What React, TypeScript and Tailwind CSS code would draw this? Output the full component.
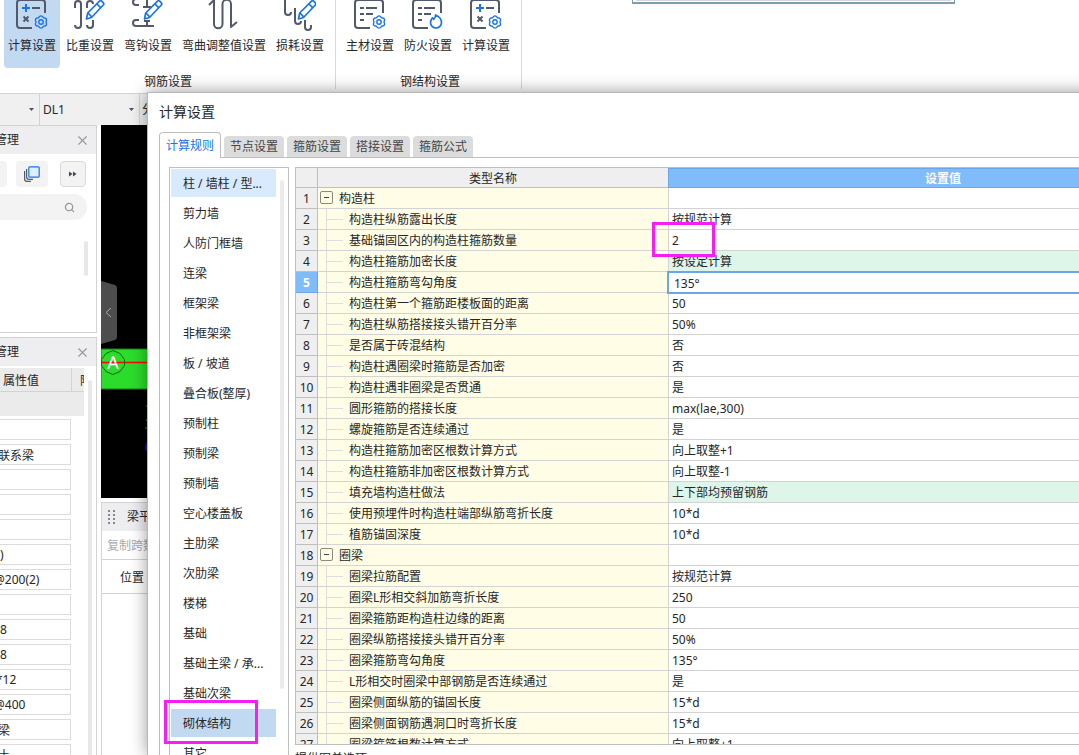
import React from "react";
import { Search, X } from "lucide-react";

const GEAR =
  "M5 0Q6.9 4 2.5 4.3Q0 8-2.5 4.3Q-6.9 4-5 0Q-6.9-4-2.5-4.3Q0-8 2.5-4.3Q6.9-4 5 0z";

const Gear = () => (
  <g transform="translate(25 22)" stroke="#1a73e8" strokeWidth="1.4">
    <path d={GEAR} />
    <circle r="2.2" />
  </g>
);

const Pencil = ({ x = 0 }: { x?: number }) => (
  <g transform={`translate(${x} 0)`} stroke="#1a73e8" strokeWidth="1.7">
    <path d="M12.500 19l1.200-6L25.500 1.200a1.6 1.6 0 0 1 2.2 0l1.6 1.6a1.6 1.6 0 0 1 0 2.2L17.500 17.500z" fill="#fff" />
    <path d="M14 13l3.6 3.8M23 4l3.6 3.6" />
  </g>
);

const Sheet = () => <path d="M29 13V3a3 3 0 0 0-3-3H4a3 3 0 0 0-3 3v22a3 3 0 0 0 3 3h12" />;

const CalcIcon = () => (
  <>
    <Sheet />
    <path d="M16 8h8M7.5 16.5l5 5M12.5 16.5l-5 5" />
    <path d="M6 8h8M10 4v8" stroke="#1a73e8" />
    <Gear />
  </>
);

const WeightIcon = () => (
  <>
    <path d="M1 8V4a3 3 0 0 1 6 0v21a3 3 0 0 1-6 0" />
    <path d="M13 8V4a3 3 0 0 1 6 0M19 20v5a3 3 0 0 1-6 0" />
    <Pencil />
  </>
);

const HookIcon = () => (
  <>
    <path d="M22-1H4a3 3 0 0 0 0 6h3M15-1v8M11 7h8" />
    <path d="M7 20H4a3 3 0 0 0 0 6h18M15 26v-5M12 21h6" />
    <Pencil />
  </>
);

const BendIcon = () => (
  <path d="M1 5l5-5v24a4 4 0 0 0 8.500 0V4a4 4 0 0 1 8.500 0v23l6-5" />
);

const LossIcon = () => (
  <>
    <path d="M1-2v14a3 3 0 0 0 6 0M11 8v13a3 3 0 0 0 6 0M21 20v7a3 3 0 0 0 6 0v-2" />
    <Pencil x={2} />
  </>
);

const Lines = () => <path d="M6 8h4M12 8h11M6 14h4M12 14h7M6 20h4" />;

const MaterialIcon = () => (
  <>
    <Sheet />
    <Lines />
    <Gear />
  </>
);

const FireIcon = () => (
  <>
    <Sheet />
    <Lines />
    <path
      d="M23.500 15c.4 2.200-.7 3.200-1.800 4.300l-1.200-1.500c-1.500 1.700-2 3-2 4.700a5.500 5.500 0 0 0 11 0c0-3.500-2.500-6-6-7.500z"
      stroke="#1a73e8"
      strokeWidth="1.7"
    />
  </>
);

const groups = [
  {
    title: "钢筋设置",
    pad: "pl-1",
    items: [
      { label: "计算设置", icon: CalcIcon, active: true },
      { label: "比重设置", icon: WeightIcon },
      { label: "弯钩设置", icon: HookIcon },
      { label: "弯曲调整值设置", icon: BendIcon },
      { label: "损耗设置", icon: LossIcon },
    ],
  },
  {
    title: "钢结构设置",
    pad: "pl-1.5",
    items: [
      { label: "主材设置", icon: MaterialIcon },
      { label: "防火设置", icon: FireIcon },
      { label: "计算设置", icon: CalcIcon },
    ],
  },
];

const Ribbon = () => (
  <header className="flex h-[93px] shrink-0 bg-white">
    {groups.map((g) => (
      <div key={g.title} className="flex">
        <div className={`flex flex-col items-center pr-[7px] ${g.pad}`}>
          <div className="flex gap-0.5">
            {g.items.map((it: { label: string; icon: React.FC; active?: boolean }) => (
              <button
                key={it.label}
                className={`flex h-[68px] flex-col items-center rounded-b-sm px-1 ${it.active ? "bg-[#c2d9f2]" : ""}`}
              >
                <svg width="32" height="32" fill="none" stroke="#51596b" strokeWidth="2" strokeLinejoin="round">
                  <it.icon />
                </svg>
                <span className="mt-1.5 whitespace-nowrap leading-4">{it.label}</span>
              </button>
            ))}
          </div>
          <span className="ml-1 mt-1.5 leading-4">{g.title}</span>
        </div>
        <div className="h-[89px] w-px bg-[#d9d9d9]" />
      </div>
    ))}
    <div className="ml-[110px] h-1 w-[323px] border-x border-b-2 border-[#7c9fb0] px-[3px]">
      <div className="h-px bg-[#d8d5dc]" />
    </div>
  </header>
);

const Picker = ({ name, value, width }: { name: string; value: string; width: string }) => (
  <div className={`relative border-r border-[#d3d3d3] ${width}`}>
    <select aria-label={name} className="h-full w-full appearance-none bg-transparent pl-[3px] outline-none">
      <option>{value}</option>
    </select>
    <svg className="pointer-events-none absolute right-1 top-3.5" width="6" height="4" fill="#4a4f66">
      <path d="M0 0h5L2.500 3z" />
    </svg>
  </div>
);

const PanelHead = () => (
  <div className="flex h-7 items-center justify-between bg-[#eeeef0] pr-1.5">
    <span className="-ml-[5px] leading-4">管理</span>
    <button aria-label="关闭">
      <X size={15} strokeWidth={1.8} color="#999" />
    </button>
  </div>
);

const props = [
  { v: "", pad: "pl-1" },
  { v: "联系梁", pad: "pl-1" },
  { v: "", pad: "pl-1" },
  { v: "", pad: "pl-1" },
  { v: "", pad: "pl-1" },
  { v: ")", pad: "pl-1.5" },
  { v: "@200(2)", pad: "pl-0" },
  { v: "", pad: "pl-1" },
  { v: "8", pad: "pl-1.5" },
  { v: "8", pad: "pl-1.5" },
  { v: "*12", pad: "pl-0.5" },
  { v: "@400", pad: "pl-0" },
  { v: "梁", pad: "pl-1" },
  { v: "土", pad: "pl-1" },
];

const Sidebar = () => (
  <aside className="flex w-[97px] shrink-0 flex-col gap-1">
    {/* component list */}
    <section className="h-52 shrink-0 overflow-hidden border-y border-r border-[#d3d3d3]">
      <PanelHead />
      <div className="mt-[7px] flex">
        <button aria-label="新建" className="h-[26px] w-[7px] rounded-r-sm bg-[#f3f3f3]" />
        <button aria-label="复制" className="ml-[9px] flex h-[26px] w-8 items-center justify-center rounded-sm bg-[#f3f3f3]">
          <svg width="16" height="16" fill="none" stroke="#51596b" strokeWidth="1.200">
            <path d="M.6 5v8a2.300 2.300 0 0 0 2.300 2.300h4M2.600 3v8a2.300 2.300 0 0 0 2.300 2.300h4" />
            <rect x="4.800" y=".8" width="10.400" height="10.400" rx="1" fill="#e0effd" stroke="#1a73e8" />
          </svg>
        </button>
        <button aria-label="更多" className="ml-3 flex h-[26px] w-[26px] items-center justify-center rounded-sm border border-[#dadada] bg-[#f3f3f3]">
          <svg width="8" height="6" fill="#3f4654">
            <path d="M0 .5l3.500 2.500L0 5.500zM4 .5l3.500 2.500L4 5.500z" />
          </svg>
        </button>
      </div>
      <div className="mt-[7px] flex h-[26px] w-[87px] items-center rounded-r-full bg-[#f3f3f3] pr-3">
        <input aria-label="搜索" className="w-0 flex-1 bg-transparent outline-none" />
        <Search size={11} strokeWidth={2.8} color="#999" />
      </div>
      <div className="ml-[84px] mt-[21px] h-[35px] w-1 rounded-full bg-[#e8e8e8]" />
    </section>

    {/* property list */}
    <section className="flex flex-1 flex-col overflow-hidden border-r border-t border-[#d3d3d3]">
      <PanelHead />
      <div className="mt-0.5 flex min-h-0 flex-1">
        <div className="w-[84px] overflow-hidden">
          <div className="flex h-6 border-b border-[#d3d3d3] bg-[#ebebeb] pt-0.5 leading-[22px]">
            <span className="-mt-0.5 w-[72px] shrink-0 border-r border-[#d3d3d3] pl-[3px] pt-0.5">属性值</span>
            <span className="shrink-0 pl-2">附</span>
          </div>
          <div className="h-6 bg-[#ebebeb]" />
          <div className="-ml-1.5 mt-[3px] flex flex-col gap-1">
            {props.map((p, i) => (
              <input
                key={i}
                aria-label={`属性 ${i + 1}`}
                defaultValue={p.v}
                className={`h-[21px] w-[77px] shrink-0 border border-l-0 border-[#dcdcdc] bg-white ${p.pad}`}
              />
            ))}
          </div>
        </div>
        <div className="ml-1 mt-3 w-1 rounded-t-full bg-[#e8e8e8]" />
      </div>
    </section>
  </aside>
);

const Drawing = () => (
  <svg className="h-[373px] w-full shrink-0 bg-black" fill="none">
    <path d="M0 156l14 4q2 1 2 3v49q0 2-2 3l-14 4z" fill="#4d4d4d" />
    <path d="M10 183l-5 4.500 5 4.500" stroke="#aaa" />
    <rect y="224" width="100%" height="40" fill="#2bdc2b" stroke="#178017" />
    <path d="M0 237.500h300" stroke="#f00" strokeWidth="1.500" />
    <path d="M12 225.500l7 3 4.500 6v6l-4.500 6-7 3-7-3-4.500-6v-6l4.500-6z" stroke="#0b6b0b" />
    <text x="12" y="244" textAnchor="middle" fontSize="18" fill="#fff">
      A
    </text>
    <path d="M45 281h2M44 303h4M45 296l3-4" stroke="#0a0" />
    <circle cx="50" cy="322" r="6" fill="#11c" />
  </svg>
);

const Workspace = () => (
  <main className="flex min-w-0 flex-1 flex-col">
    <Drawing />
    <section className="mt-1 flex flex-1 flex-col border-l border-t border-[#d3d3d3]">
      <div className="flex h-7 shrink-0 items-center bg-[#eeeef0] pl-1.5">
        <svg width="8" height="16" fill="#888">
          {[1, 5, 9, 13].map((y) => (
            <path key={y} d={`M0 ${y}h2v2h-2zM5 ${y}h2v2h-2z`} />
          ))}
        </svg>
        <span className="ml-[11px]">梁平</span>
      </div>
      <div className="h-7 shrink-0 pl-[5px] pt-0.5 leading-[26px] text-[#aaa]">复制跨数</div>
      <div className="h-[35px] shrink-0 border-y border-[#d3d3d3] pl-[18px] leading-9">位置</div>
    </section>
  </main>
);

const tabs = ["计算规则", "节点设置", "箍筋设置", "搭接设置", "箍筋公式"];

const kinds = [
  "柱 / 墙柱 / 型...",
  "剪力墙",
  "人防门框墙",
  "连梁",
  "框架梁",
  "非框架梁",
  "板 / 坡道",
  "叠合板(整厚)",
  "预制柱",
  "预制梁",
  "预制墙",
  "空心楼盖板",
  "主肋梁",
  "次肋梁",
  "楼梯",
  "基础",
  "基础主梁 / 承...",
  "基础次梁",
  "砌体结构",
  "其它",
];

type Row = { name: string; value?: string; group?: boolean; changed?: boolean };

const rows: Row[] = [
  { name: "构造柱", group: true },
  { name: "构造柱纵筋露出长度", value: "按规范计算" },
  { name: "基础锚固区内的构造柱箍筋数量", value: "2" },
  { name: "构造柱箍筋加密长度", value: "按设定计算", changed: true },
  { name: "构造柱箍筋弯勾角度", value: "135°" },
  { name: "构造柱第一个箍筋距楼板面的距离", value: "50" },
  { name: "构造柱纵筋搭接接头错开百分率", value: "50%" },
  { name: "是否属于砖混结构", value: "否" },
  { name: "构造柱遇圈梁时箍筋是否加密", value: "否" },
  { name: "构造柱遇非圈梁是否贯通", value: "是" },
  { name: "圆形箍筋的搭接长度", value: "max(lae,300)" },
  { name: "螺旋箍筋是否连续通过", value: "是" },
  { name: "构造柱箍筋加密区根数计算方式", value: "向上取整+1" },
  { name: "构造柱箍筋非加密区根数计算方式", value: "向上取整-1" },
  { name: "填充墙构造柱做法", value: "上下部均预留钢筋", changed: true },
  { name: "使用预埋件时构造柱端部纵筋弯折长度", value: "10*d" },
  { name: "植筋锚固深度", value: "10*d" },
  { name: "圈梁", group: true },
  { name: "圈梁拉筋配置", value: "按规范计算" },
  { name: "圈梁L形相交斜加筋弯折长度", value: "250" },
  { name: "圈梁箍筋距构造柱边缘的距离", value: "50" },
  { name: "圈梁纵筋搭接接头错开百分率", value: "50%" },
  { name: "圈梁箍筋弯勾角度", value: "135°" },
  { name: "L形相交时圈梁中部钢筋是否连续通过", value: "是" },
  { name: "圈梁侧面纵筋的锚固长度", value: "15*d" },
  { name: "圈梁侧面钢筋遇洞口时弯折长度", value: "15*d" },
  { name: "圈梁箍筋根数计算方式", value: "向上取整+1" },
];

const RuleTable = () => (
  <table className="w-full table-fixed border-separate border-spacing-0">
    <colgroup>
      <col className="w-[22px]" />
      <col className="w-[350px]" />
      <col />
    </colgroup>
    <thead>
      <tr className="h-5">
        <th className="border-b border-r border-[#bfbfbf] bg-[#efefef] p-0" />
        <th className="border-b border-[#bfbfbf] bg-[#efefef] p-0 pt-0.5 font-normal leading-[17px]">类型名称</th>
        <th className="border border-[#6ba6e8] bg-[#80bbfa] p-0 pt-0.5 font-bold leading-4 text-white">设置值</th>
      </tr>
    </thead>
    <tbody>
      {rows.map((r, i) => {
        const current = i === 4;
        return (
          <tr key={r.name} className="h-[21px]">
            <th
              className={`border-b border-r p-0 pt-0.5 leading-[18px] ${
                current ? "border-[#6ba6e8] bg-[#80bbfa] font-bold text-white" : "border-[#bfbfbf] bg-[#efefef] font-normal"
              }`}
            >
              {i + 1}
            </th>
            <td className="border-b border-[#d3d3d3] bg-[#fffde6] p-0">
              {r.group ? (
                <div className="flex h-5 pl-0.5">
                  <button
                    aria-label="收起"
                    className="mt-[3px] flex h-[13px] w-[13px] items-center justify-center rounded-xs border border-[#8a8a80]"
                  >
                    <span className="h-px w-[5px] bg-[#444]" />
                  </button>
                  <span className="ml-1.5 pt-0.5 leading-[18px]">{r.name}</span>
                </div>
              ) : (
                <div className="flex h-5 items-center pl-2">
                  <span className="h-5 w-px bg-[#dedede]" />
                  <span className="h-px w-4 bg-[#dedede]" />
                  <span className="ml-1.5 pt-0.5 leading-[18px]">{r.name}</span>
                </div>
              )}
            </td>
            {current ? (
              <td className="border-b border-l border-[#6ba6e8] p-0 outline-2 -outline-offset-1 outline-[#6ba6e8]">
                <input
                  aria-label={r.name}
                  defaultValue={r.value}
                  className="block h-5 w-full bg-transparent pl-[5px] pt-0.5 outline-none"
                />
              </td>
            ) : (
              <td
                className={`border-b border-l border-[#d3d3d3] pb-0 pl-[3px] pr-0 pt-0.5 leading-[18px] ${
                  r.changed ? "bg-[#def5ea]" : "bg-white"
                }`}
              >
                {r.value}
              </td>
            )}
          </tr>
        );
      })}
    </tbody>
  </table>
);

const SettingsDialog = () => (
  <div
    role="dialog"
    aria-label="计算设置"
    className="absolute -right-40 bottom-0 left-[147px] top-[92px] flex flex-col border-l border-t border-[#b8b8b8] bg-white pl-[11px] shadow-[0_0_16px_rgba(0,0,0,0.4)]"
  >
    <h1 className="mt-[7px] h-6 text-sm leading-6">计算设置</h1>

    <div role="tablist" className="mt-2 flex h-[26px] items-end">
      {tabs.map((t, i) =>
        i === 0 ? (
          <button
            key={t}
            role="tab"
            aria-selected="true"
            className="h-[26px] w-[62px] rounded-t border border-b-0 border-[#bfbfbf] text-[#1a73e8]"
          >
            {t}
          </button>
        ) : (
          <div key={t} className="flex h-[26px] items-end border-b border-[#bfbfbf] pl-[3px]">
            <button role="tab" aria-selected="false" className="h-[21px] w-[60px] rounded-t bg-[#dcdcdc] text-[#444]">
              {t}
            </button>
          </div>
        )
      )}
      <div className="h-[26px] flex-1 border-b border-[#bfbfbf]" />
    </div>

    <div className="flex min-h-0 flex-1 border-l border-[#bfbfbf] pl-[9px] pr-5 pt-[9px]">
      {/* member kinds */}
      <div className="flex w-[120px] shrink-0 overflow-hidden border border-b-0 border-[#bfbfbf] pl-px pt-px">
        <ul className="flex w-[105px] flex-col gap-0.5">
          {kinds.map((k, i) => (
            <li key={k}>
              <button
                className={`block h-7 w-full whitespace-nowrap pl-3 pt-0.5 text-left leading-[26px] ${
                  i === 0 ? "bg-[#d8eafe]" : k === "砌体结构" ? "bg-[#c2d9f2]" : ""
                }`}
              >
                {k}
              </button>
            </li>
          ))}
        </ul>
        <div className="ml-1 mt-[11px] h-[509px] w-1 rounded-full bg-[#ebebeb]" />
      </div>

      {/* rules */}
      <div className="ml-1.5 flex min-w-0 flex-1 flex-col">
        <div className="min-h-0 flex-1 overflow-hidden border border-[#bfbfbf]">
          <RuleTable />
        </div>
        <p className="h-2.5 shrink-0 overflow-hidden pt-1 leading-5">提供图单选项</p>
      </div>
    </div>
  </div>
);

export default function App() {
  return (
    <div className="relative flex h-screen flex-col overflow-hidden bg-white font-['Noto_Sans','Noto_Sans_CJK_SC',sans-serif] text-xs text-[#262626]">
      <Ribbon />
      <div className="flex h-8 shrink-0 border-t border-[#d3d3d3] bg-[#f0f0f0]">
        <Picker name="构件类型" value="" width="w-10" />
        <Picker name="构件名称" value="DL1" width="w-[100px]" />
        <span className="pl-0.5 leading-8">分</span>
      </div>
      <div className="flex min-h-0 flex-1 gap-1">
        <Sidebar />
        <Workspace />
      </div>

      <SettingsDialog />

      {/* highlight marks */}
      <div className="pointer-events-none absolute left-[652px] top-[222px] h-[35px] w-[63px] border-3 border-[#f51ff5]" />
      <div className="pointer-events-none absolute left-[164px] top-[700px] h-11 w-[94px] border-3 border-[#f51ff5]" />
    </div>
  );
}
